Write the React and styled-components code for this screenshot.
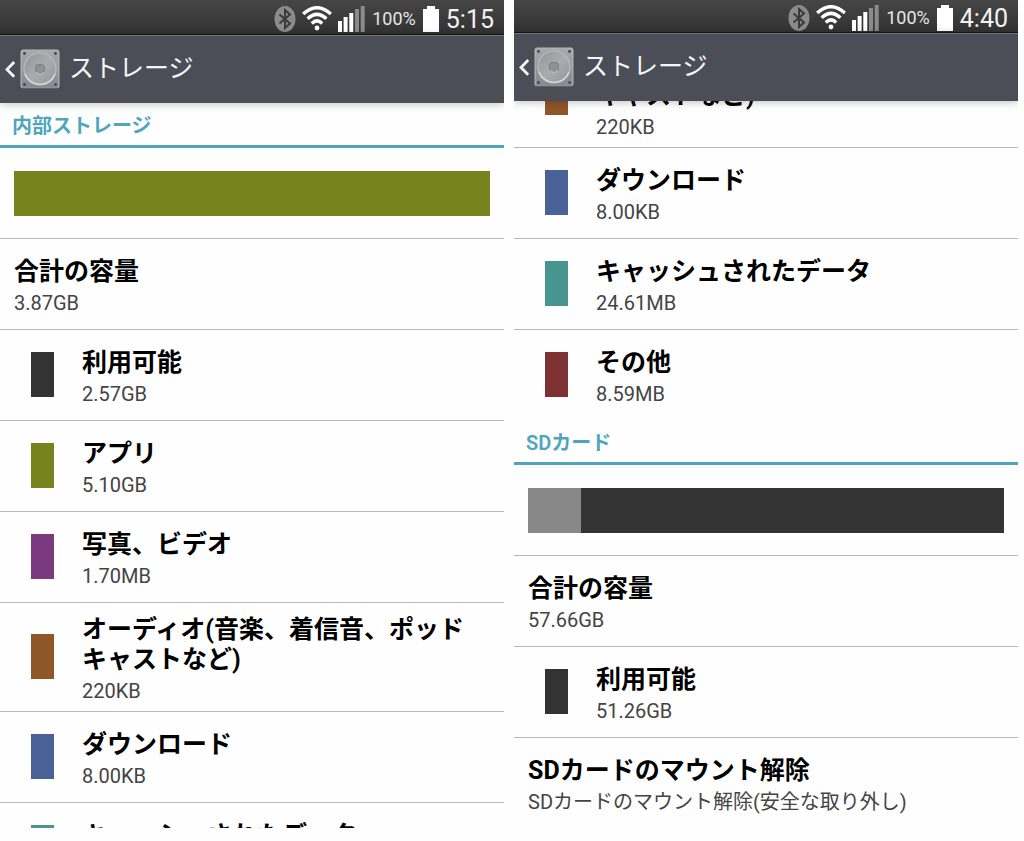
import React from 'react';
import styled, { createGlobalStyle } from 'styled-components';

const GlobalStyle = createGlobalStyle`
  *, *::before, *::after { box-sizing: border-box; }
  body {
    margin: 0;
    background: #fefefe;
    font-family: Roboto, "Noto Sans CJK JP", sans-serif;
    color: #000;
  }
`;

const Page = styled.main`
  display: grid;
  grid-template-columns: 1fr 1fr;
  gap: 10px;
  height: 100vh;
  padding: 0 6px 13px 0;
`;

const Phone = styled.section`
  display: flex;
  flex-direction: column;
  min-width: 0;
  min-height: 0;
  overflow: hidden;
`;

const StatusBar = styled.div`
  display: flex;
  flex: none;
  align-items: center;
  justify-content: flex-end;
  gap: 7px;
  height: ${(p) => (p.$compact ? 33 : 35)}px;
  padding: 3px 10px 0 0;
  border-bottom: 1px solid #141414;
  background: linear-gradient(#464646, #323232);
  color: #f2f2f2;

  svg { display: block; flex: none; }
`;

const StatusIcons = styled.span`
  display: flex;
  align-items: center;
  gap: 6px;
`;

const Percent = styled.span`
  font-size: 18px;
  line-height: 24px;
  color: #e6e6e6;
`;

const Clock = styled.time`
  padding-top: 2px;
  font-size: 25px;
  line-height: 30px;
`;

const AppBar = styled.header`
  position: relative;
  z-index: 1;
  flex: none;
  height: 68px;
  border-top: 1px solid #74767b;
  background: #4b4e56;
  box-shadow: 0 1px 8px rgba(0, 0, 0, 0.25);
`;

const BackButton = styled.button`
  display: flex;
  align-items: center;
  gap: 4px;
  height: 100%;
  padding: 0 8px 2px 4px;
  border: 0;
  background: none;
  color: #f4f5f7;
  font: inherit;
  cursor: pointer;

  svg { display: block; flex: none; }
`;

const AppTitle = styled.span`
  padding-left: 5px;
  font-size: 25px;
  line-height: 32px;
`;

const Scroller = styled.div`
  display: flex;
  flex: 1;
  flex-direction: column;
  justify-content: ${(p) => (p.$atEnd ? 'flex-end' : 'flex-start')};
  min-height: 0;
  overflow: hidden;
`;

const Category = styled.h2`
  flex: none;
  height: 45px;
  margin: 0;
  padding: 8px 12px 0;
  border-bottom: 3px solid #4fa5bd;
  color: #4fa5bd;
  font-size: 20px;
  font-weight: 600;
  line-height: 30px;
`;

const List = styled.ul`
  flex: none;
  margin: 0;
  padding: 0;
  list-style: none;
`;

const Item = styled.li`
  border-bottom: ${(p) => (p.$last ? 0 : 1)}px solid #b9b9b9;
`;

const UsageRow = styled.div`
  height: 90px;
  padding: 23px 14px 0;
`;

const UsageBar = styled.div`
  display: flex;
  height: 45px;
`;

const Segment = styled.div`
  flex: ${(p) => p.$share} 0 0;
  background: ${(p) => p.$color};
`;

const Row = styled.div`
  display: flex;
  align-items: center;
  gap: 28px;
  width: 100%;
  min-height: 90px;
  padding: 2px 24px 4px ${(p) => (p.$indent ? 31 : 14)}px;
  border: 0;
  background: none;
  color: inherit;
  font: inherit;
  text-align: left;
`;

const Swatch = styled.span`
  flex: none;
  width: 23px;
  height: 45px;
  background: ${(p) => p.$color};
`;

const Texts = styled.span`
  display: flex;
  flex: 1;
  flex-direction: column;
  min-width: 0;
  padding-top: 10px;
`;

const Title = styled.span`
  font-size: 25px;
  font-weight: 700;
  line-height: 30px;
`;

const Value = styled.span`
  font-size: 20px;
  line-height: 32px;
  color: #444;
`;

const BluetoothIcon = () => (
  <svg width="22" height="26" viewBox="0 0 22 26" aria-hidden="true">
    <ellipse cx="11" cy="13" rx="10.5" ry="13" fill="#8b8b8b" />
    <path d="M5.5 8.5 L16 17.5 L11 22 V4 L16 8.5 L5.5 17.5" fill="none" stroke="#3a3a3a" strokeWidth="2" />
  </svg>
);

const WifiIcon = () => (
  <svg width="30" height="25" viewBox="0 0 30 25" fill="none" stroke="#fff" strokeWidth="3.4" aria-hidden="true">
    <path d="M1.2 8 Q15 -4.6 28.8 8" />
    <path d="M5.6 12.8 Q15 4 24.4 12.8" />
    <path d="M9.8 17.4 Q15 12.4 20.2 17.4" />
    <circle cx="15" cy="22" r="2.4" fill="#fff" stroke="none" />
  </svg>
);

const SignalIcon = () => (
  <svg width="27" height="26" viewBox="0 0 27 26" aria-hidden="true">
    <g fill="#fff">
      <rect x="0" y="15" width="4" height="11" />
      <rect x="5.6" y="11" width="4" height="15" />
      <rect x="11.3" y="7" width="4" height="19" />
    </g>
    <g fill="#8b8b8b">
      <rect x="17" y="3" width="4" height="23" />
      <rect x="22.7" y="0" width="4" height="26" />
    </g>
  </svg>
);

const BatteryIcon = () => (
  <svg width="16" height="26" viewBox="0 0 16 26" aria-hidden="true">
    <path d="M4 0H12V3H16V26H0V3H4Z" fill="#fff" />
  </svg>
);

const ChevronIcon = () => (
  <svg width="12" height="18" viewBox="0 0 12 18" aria-hidden="true">
    <path d="M10.2 2 L3 9.4 L10.2 16.8" fill="none" stroke="#f4f5f7" strokeWidth="2.8" />
  </svg>
);

const DriveIcon = ({ id }) => (
  <svg width="40" height="40" viewBox="0 0 40 40" aria-hidden="true">
    <defs>
      <linearGradient id={`${id}-plate`} x1="0" y1="0" x2="0" y2="1">
        <stop offset="0" stopColor="#a7abaf" />
        <stop offset="1" stopColor="#858a8e" />
      </linearGradient>
      <linearGradient id={`${id}-disc`} x1="0" y1="0" x2="1" y2="1">
        <stop offset="0" stopColor="#8f9498" />
        <stop offset="0.5" stopColor="#a9adb0" />
        <stop offset="1" stopColor="#92979b" />
      </linearGradient>
    </defs>
    <rect x="1" y="1" width="38" height="38" rx="2" fill={`url(#${id}-plate)`} stroke="#b4b8bb" />
    <path d="M2 39.3H38" stroke="#55595e" />
    <circle cx="20" cy="20" r="16" fill={`url(#${id}-disc)`} stroke="#b9bdc0" strokeWidth="1.2" />
    <path d="M5 25 A16 16 0 0 0 35 25" fill="none" stroke="#dde0e2" strokeWidth="1.2" />
    <rect x="15.5" y="15.5" width="9" height="9" rx="3" fill="#8d9296" stroke="#777c80" />
    <path d="M16 23 Q20 27.5 24 23" fill="none" stroke="#c5c9cc" />
    <g fill="#45494d">
      <circle cx="4.5" cy="4.5" r="1.4" />
      <circle cx="35.5" cy="4.5" r="1.4" />
      <circle cx="4.5" cy="35.5" r="1.4" />
      <circle cx="35.5" cy="35.5" r="1.4" />
    </g>
  </svg>
);

const Header = ({ id, time, compact }) => (
  <>
    <StatusBar $compact={compact}>
      <StatusIcons>
        <BluetoothIcon />
        <WifiIcon />
        <SignalIcon />
      </StatusIcons>
      <Percent>100%</Percent>
      <BatteryIcon />
      <Clock>{time}</Clock>
    </StatusBar>
    <AppBar>
      <BackButton type="button">
        <ChevronIcon />
        <DriveIcon id={id} />
        <AppTitle>ストレージ</AppTitle>
      </BackButton>
    </AppBar>
  </>
);

const Usage = ({ segments }) => (
  <Item>
    <UsageRow>
      <UsageBar>
        {segments.map(([color, share]) => (
          <Segment key={color} $color={color} $share={share} />
        ))}
      </UsageBar>
    </UsageRow>
  </Item>
);

const Entry = ({ title, value, color, last, action }) => (
  <Item $last={last}>
    <Row as={action ? 'button' : 'div'} type={action ? 'button' : undefined} $indent={!!color}>
      {color && <Swatch $color={color} />}
      <Texts>
        <Title>{title}</Title>
        <Value>{value}</Value>
      </Texts>
    </Row>
  </Item>
);

const audio = { title: 'オーディオ(音楽、着信音、ポッドキャストなど)', value: '220KB', color: '#8f5728' };
const downloads = { title: 'ダウンロード', value: '8.00KB', color: '#486196' };
const cached = { title: 'キャッシュされたデータ', value: '24.61MB', color: '#48948f' };

export default function App() {
  return (
    <>
      <GlobalStyle />
      <Page>
        <Phone>
          <Header id="internal" time="5:15" />
          <Scroller>
            <Category>内部ストレージ</Category>
            <List>
              <Usage segments={[['#77831c', 1]]} />
              <Entry title="合計の容量" value="3.87GB" />
              <Entry title="利用可能" value="2.57GB" color="#333333" />
              <Entry title="アプリ" value="5.10GB" color="#77831c" />
              <Entry title="写真、ビデオ" value="1.70MB" color="#7b3a80" />
              <Entry {...audio} />
              <Entry {...downloads} />
              <Entry {...cached} />
            </List>
          </Scroller>
        </Phone>
        <Phone>
          <Header id="card" time="4:40" compact />
          <Scroller $atEnd>
            <List>
              <Entry {...audio} />
              <Entry {...downloads} />
              <Entry {...cached} />
              <Entry title="その他" value="8.59MB" color="#7e3133" last />
            </List>
            <Category>SDカード</Category>
            <List>
              <Usage segments={[['#888888', 1], ['#333333', 8]]} />
              <Entry title="合計の容量" value="57.66GB" />
              <Entry title="利用可能" value="51.26GB" color="#333333" />
              <Entry title="SDカードのマウント解除" value="SDカードのマウント解除(安全な取り外し)" last action />
            </List>
          </Scroller>
        </Phone>
      </Page>
    </>
  );
}
